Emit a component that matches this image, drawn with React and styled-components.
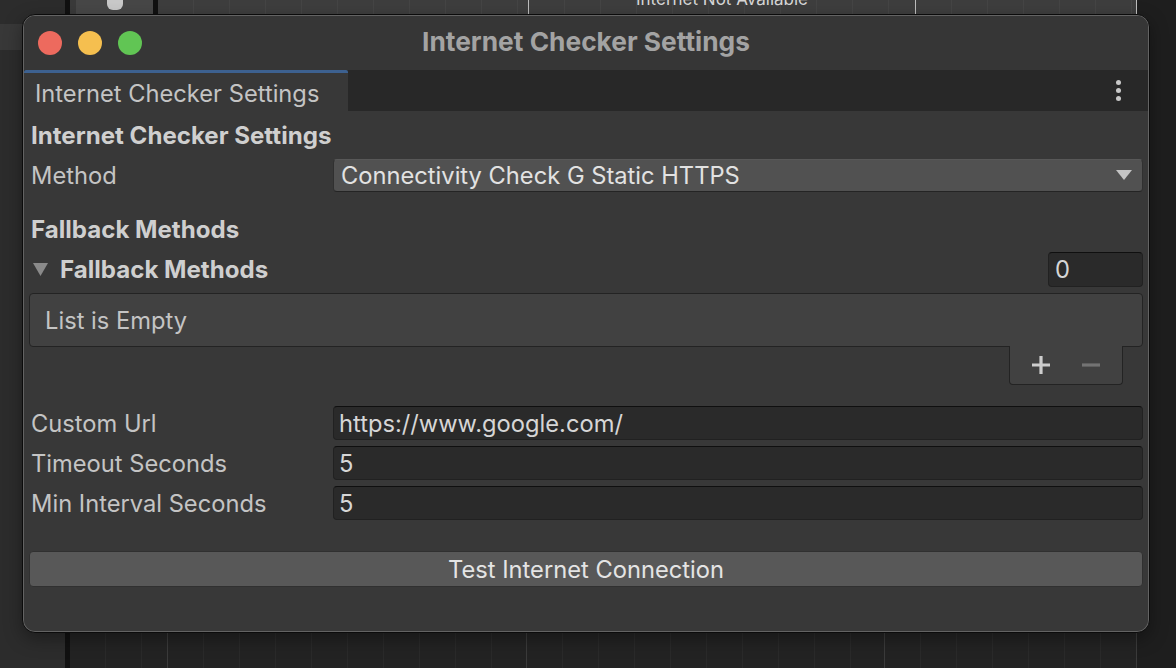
import React from 'react';
import styled, { createGlobalStyle } from 'styled-components';

const GlobalStyle = createGlobalStyle`
  html, body {
    margin: 0;
    padding: 0;
    background: #1f1f1f;
    overflow: hidden;
  }
  * {
    box-sizing: border-box;
  }
`;

const Desktop = styled.div`
  position: relative;
  width: 1176px;
  height: 668px;
  display: flex;
  overflow: hidden;
  background: #1f1f1f;
  font-family: Inter, 'Noto Sans', 'Liberation Sans', sans-serif;
`;

const LeftDock = styled.div`
  flex: 0 0 65px;
  background: #2c2c2c;
  display: flex;
  flex-direction: column;
`;

const DockItem = styled.div`
  margin-top: 24px;
  height: 26px;
  background: #383838;
`;

const DockEdge = styled.div`
  flex: 0 0 5px;
  background: #111;
`;

const Editor = styled.div`
  flex: 0 0 1067px;
  display: flex;
  flex-direction: column;
`;

const TopRow = styled.div`
  margin-top: -16px;
  height: 30px;
  display: flex;
`;

const IconCell = styled.div`
  flex: 0 0 88px;
  background: #474747;
  border-left: 6px solid #3a3a3a;
  border-right: 5px solid #111;
  display: flex;
  align-items: center;
  justify-content: center;
`;

const IconBlob = styled.div`
  width: 16px;
  height: 14px;
  margin-top: 8px;
  background: #c9c9c9;
  border-radius: 0 0 6px 6px;
`;

const TableCell = styled.div`
  flex: 0 0 ${(p) => p.$w}px;
  display: flex;
  align-items: center;
  justify-content: center;
  background: ${(p) => (p.$dark ? '#232323' : '#3e3e3e')};
  background-image: repeating-linear-gradient(
    to right,
    transparent 0 35px,
    ${(p) => (p.$dark ? '#2a2a2a' : '#454545')} 35px 36px
  );
  border-right: 1px solid ${(p) => (p.$dark ? '#3b3b3b' : '#bdbdbd')};
  color: #d6d6d6;
  font-size: 17px;
`;

const LowerArea = styled.div`
  flex: 1;
  display: flex;
  background: linear-gradient(#212121, #2a2a2a);
`;

const RightStrip = styled.div`
  flex: 1;
  background: #1e1e1e;
`;

const Window = styled.div`
  position: absolute;
  left: 22px;
  top: 14px;
  width: 1128px;
  height: 619px;
  border: 1px solid #0b0b0b;
  border-radius: 13px;
  background: #636363;
  padding: 1px;
  box-shadow: 0 6px 18px rgba(0, 0, 0, 0.35);
`;

const Frame = styled.div`
  height: 100%;
  border-radius: 11px;
  overflow: hidden;
  background: #383838;
  display: flex;
  flex-direction: column;
`;

const TitleBar = styled.div`
  flex: 0 0 54px;
  background: #363636;
  display: grid;
  grid-template-columns: 1fr auto 1fr;
  align-items: center;
`;

const Lights = styled.div`
  display: flex;
  gap: 16px;
  padding-left: 14px;
`;

const Light = styled.span`
  width: 24px;
  height: 24px;
  border-radius: 50%;
  background: ${(p) => p.$color};
`;

const WindowTitle = styled.div`
  margin-top: -4px;
  color: #a3a3a3;
  font-size: 26.3px;
  font-weight: 700;
`;

const TabBar = styled.div`
  flex: 0 0 41px;
  background: #282828;
  display: flex;
  align-items: stretch;
  justify-content: space-between;
`;

const Tab = styled.div`
  width: 324px;
  background: #383838;
  border-top: 3px solid #3d6190;
  border-radius: 2px 2px 0 0;
  padding: 3px 0 0 11px;
  display: flex;
  align-items: center;
  color: #c4c4c4;
  font-size: 23.7px;
`;

const Kebab = styled.div`
  width: 20px;
  margin-right: 20px;
  display: flex;
  flex-direction: column;
  align-items: center;
  justify-content: center;
  gap: 3px;
  span {
    width: 5px;
    height: 5px;
    border-radius: 50%;
    background: #c8c8c8;
  }
`;

const Content = styled.div`
  flex: 1;
  padding: 4px 5px 0;
  display: flex;
  flex-direction: column;
`;

const Header = styled.div`
  height: 40px;
  margin-top: ${(p) => p.$gap || 0}px;
  padding-left: 2px;
  display: flex;
  align-items: center;
  color: #cfcfcf;
  font-size: 24.1px;
  font-weight: 700;
`;

const Row = styled.div`
  height: 40px;
  margin-top: ${(p) => p.$gap || 0}px;
  display: grid;
  grid-template-columns: 304px 1fr;
  align-items: center;
`;

const Label = styled.div`
  padding-left: 2px;
  color: #c4c4c4;
  font-size: 23.7px;
`;

const Dropdown = styled.div`
  height: 33px;
  background: #515151;
  border: 1px solid #303030;
  border-top-color: #585858;
  border-bottom-color: #242424;
  border-radius: 4px;
  padding: 0 10px 0 7px;
  display: flex;
  align-items: center;
  justify-content: space-between;
  color: #e2e2e2;
  font-size: 23.7px;
`;

const TextField = styled.div`
  height: 34px;
  background: #2a2a2a;
  border: 1px solid #212121;
  border-top-color: #0f0f0f;
  border-radius: 4px;
  padding-left: 5px;
  display: flex;
  align-items: center;
  color: #d6d6d6;
  font-size: 23.7px;
`;

const FoldoutRow = styled.div`
  height: 40px;
  display: flex;
  align-items: center;
  justify-content: space-between;
`;

const Foldout = styled.div`
  display: flex;
  align-items: center;
  gap: 12px;
  padding-left: 4px;
  color: #cfcfcf;
  font-size: 24.1px;
  font-weight: 700;
`;

const CountField = styled(TextField)`
  width: 95px;
  height: 35px;
  padding-left: 6px;
`;

const ListBox = styled.div`
  margin-top: 4px;
  height: 54px;
  background: #414141;
  border: 1px solid #232323;
  border-radius: 4px;
  padding-left: 15px;
  display: flex;
  align-items: center;
  color: #c4c4c4;
  font-size: 23.7px;
`;

const ListFooter = styled.div`
  align-self: flex-end;
  margin-right: 20px;
  margin-top: -1px;
  width: 114px;
  height: 39px;
  background: #414141;
  border: 1px solid #232323;
  border-top: none;
  border-radius: 0 0 4px 4px;
  display: flex;
  align-items: center;
  justify-content: center;
  gap: 30px;
`;

const ActionButton = styled.div`
  margin-top: 28px;
  height: 36px;
  background: #585858;
  border: 1px solid #303030;
  border-radius: 4px;
  display: flex;
  align-items: center;
  justify-content: center;
  color: #e4e4e4;
  font-size: 23.7px;
`;

const Triangle = ({ w = 16, h = 10, color = '#c4c4c4' }) => (
  <svg width={w} height={h} viewBox={`0 0 ${w} ${h}`}>
    <path d={`M0 0 H${w} L${w / 2} ${h} Z`} fill={color} />
  </svg>
);

const PlusIcon = () => (
  <svg width="20" height="20" viewBox="0 0 20 20">
    <path d="M10 1 V19 M1 10 H19" stroke="#cdcdcd" strokeWidth="3.2" />
  </svg>
);

const MinusIcon = () => (
  <svg width="20" height="20" viewBox="0 0 20 20">
    <path d="M1 10 H19" stroke="#737373" strokeWidth="3.2" />
  </svg>
);

const fields = [
  { label: 'Custom Url', value: 'https://www.google.com/' },
  { label: 'Timeout Seconds', value: '5' },
  { label: 'Min Interval Seconds', value: '5' },
];

export default function App() {
  return (
    <>
      <GlobalStyle />
      <Desktop>
        <LeftDock>
          <DockItem />
        </LeftDock>
        <DockEdge />
        <Editor>
          <TopRow>
            <IconCell>
              <IconBlob />
            </IconCell>
            <TableCell $w={371} />
            <TableCell $w={387}>Internet Not Available</TableCell>
            <TableCell $w={221} />
          </TopRow>
          <LowerArea>
            <TableCell $dark $w={98} />
            <TableCell $dark $w={359} />
            <TableCell $dark $w={358} />
            <TableCell $dark $w={252} />
          </LowerArea>
        </Editor>
        <RightStrip />

        <Window>
          <Frame>
            <TitleBar>
              <Lights>
                <Light $color="#ed6a5e" />
                <Light $color="#f5bf4f" />
                <Light $color="#61c554" />
              </Lights>
              <WindowTitle>Internet Checker Settings</WindowTitle>
              <div />
            </TitleBar>
            <TabBar>
              <Tab>Internet Checker Settings</Tab>
              <Kebab>
                <span />
                <span />
                <span />
              </Kebab>
            </TabBar>
            <Content>
              <Header>Internet Checker Settings</Header>
              <Row>
                <Label>Method</Label>
                <Dropdown>
                  Connectivity Check G Static HTTPS
                  <Triangle />
                </Dropdown>
              </Row>
              <Header $gap={14}>Fallback Methods</Header>
              <FoldoutRow>
                <Foldout>
                  <Triangle w={15} h={13} color="#8a8a8a" />
                  Fallback Methods
                </Foldout>
                <CountField>0</CountField>
              </FoldoutRow>
              <ListBox>List is Empty</ListBox>
              <ListFooter>
                <PlusIcon />
                <MinusIcon />
              </ListFooter>
              {fields.map((f, i) => (
                <Row key={f.label} $gap={i === 0 ? 18 : 0}>
                  <Label>{f.label}</Label>
                  <TextField>{f.value}</TextField>
                </Row>
              ))}
              <ActionButton>Test Internet Connection</ActionButton>
            </Content>
          </Frame>
        </Window>
      </Desktop>
    </>
  );
}
